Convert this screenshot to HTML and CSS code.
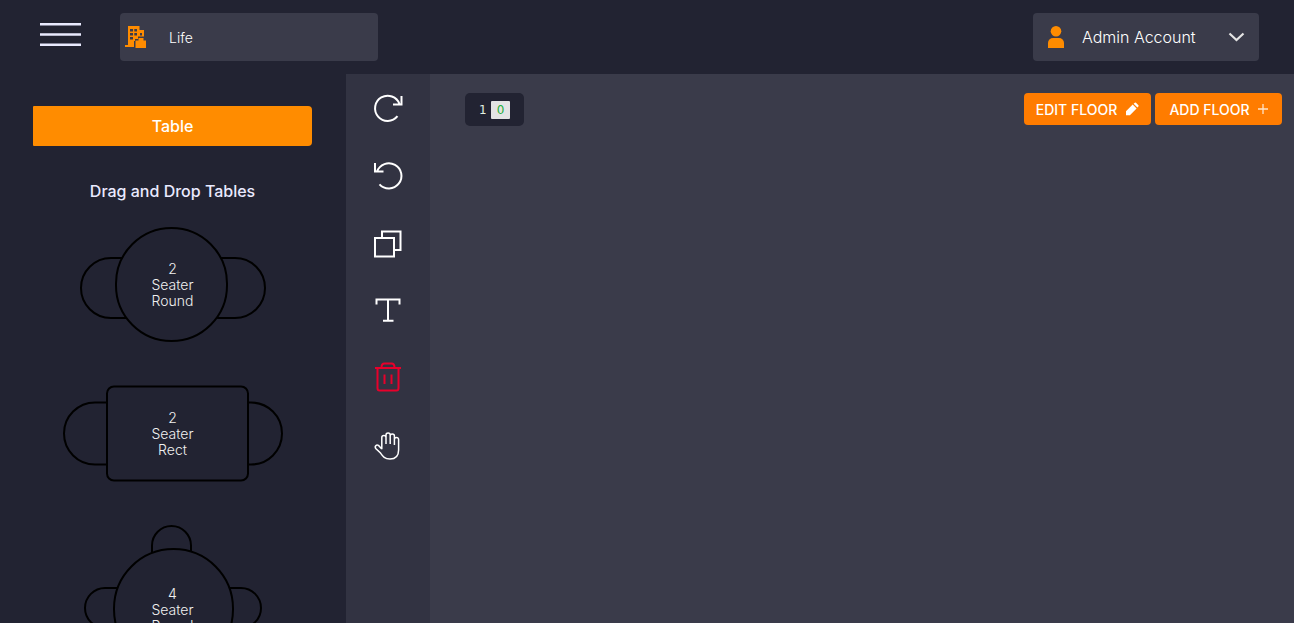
FILE: index.html
```html
<!DOCTYPE html>
<html lang="en">
<head>
<meta charset="utf-8">
<title>Floor editor</title>
<link rel="stylesheet" href="styles.css">
</head>
<body>
<header class="topbar">
  <button class="menu" aria-label="Menu"><svg width="42" height="26" viewBox="0 0 42 26"><path d="M0 2.2h41M0 12.5h41M0 22.8h41"/></svg></button>
  <label class="place">
    <svg width="22" height="22" viewBox="0 0 22 22" fill="#ff8c00" fill-rule="evenodd"><path d="M3 0h11.500v4H19v6.500h-6V13h-3v2H9v6H0v-2h3zM5 3v2.500h3V3zM9.300 3v2.500h2.700V3zM5 7v2.500h3V7zM9.300 7v2.500h2.700V7zM5 11v2.500h3V11zM15 7v2.500h2V7z"/><path d="M13.500 14.500V12h5v2.500H21V22H10.500v-7.500z"/></svg>
    <input class="place-name" type="text" value="Life" aria-label="Place">
  </label>
  <button class="account">
    <svg width="16" height="22" viewBox="0 0 16 22" fill="#ff8c00"><circle cx="8" cy="5.3" r="5.3"/><path d="M0 22v-5a5 5 0 0 1 5-5h6a5 5 0 0 1 5 5v5z"/></svg>
    <span class="account-name">Admin Account</span>
    <svg width="16" height="10" viewBox="0 0 16 10" fill="none" stroke="#e4e4e4" stroke-width="2.2"><path d="M1.5 1.500L8.500 8l7-6.500"/></svg>
  </button>
</header>
<main class="workspace">
  <aside class="sidebar">
    <button class="tab">Table</button>
    <h2 class="heading">Drag and Drop Tables</h2>
    <ul class="tables">
      <li class="table-item" draggable="true">
        <svg class="shape" width="188" height="116" viewBox="0 0 188 116"><rect x="2" y="31" width="76" height="60" rx="30"/><rect x="110" y="31" width="76" height="60" rx="30"/><rect class="top" x="37" y="1" width="111" height="113" rx="55.5"/></svg>
        <span class="label">2<br>Seater<br>Round</span>
      </li>
      <li class="table-item" draggable="true">
        <svg class="shape" width="220" height="98" viewBox="0 0 220 98"><rect x="1" y="17.500" width="80" height="62" rx="31"/><rect x="139" y="17.500" width="80" height="62" rx="31"/><rect class="top" x="44" y="1.500" width="141" height="94" rx="7"/></svg>
        <span class="label">2<br>Seater<br>Rect</span>
      </li>
      <li class="table-item" draggable="true">
        <svg class="shape" width="178" height="170" viewBox="0 0 178 170"><rect x="68" y="1" width="39" height="60" rx="19.5"/><rect x="68" y="107" width="39" height="60" rx="19.5"/><rect x="1" y="63" width="60" height="40" rx="20"/><rect x="117" y="63" width="60" height="40" rx="20"/><rect class="top" x="30" y="24" width="119" height="120" rx="59.5"/></svg>
        <span class="label">4<br>Seater<br>Round</span>
      </li>
    </ul>
  </aside>
  <nav class="tools" aria-label="Tools">
    <button class="tool" aria-label="Rotate right"><svg viewBox="0 0 32 32"><path d="M25.500 24.200A12.600 12.600 0 1 1 27.500 12M29.500 4v8.500H21"/></svg></button>
    <button class="tool" aria-label="Rotate left"><svg viewBox="0 0 32 32"><path d="M7.500 24.300A12.600 12.600 0 1 0 5 11.600M3 3v8.500h8.500"/></svg></button>
    <button class="tool" aria-label="Duplicate"><svg viewBox="0 0 32 32"><path d="M3 10h19v18.500H3zM10 10V3.500h18.500V22H22"/></svg></button>
    <button class="tool" aria-label="Text"><svg viewBox="0 0 32 32"><path d="M4.500 8.500V3.500h23v5M16 3.500v21M11 24.700h10.500"/></svg></button>
    <button class="tool delete" aria-label="Delete"><svg viewBox="0 0 32 32"><path d="M3 4h26M5.500 4v20q0 2.500 2 2.500h17q2 0 2-2.500V4M9.500 3.500q0-4 3-4h7q3 0 3 4M12.500 10.500V20M19.500 10.500V20"/></svg></button>
    <button class="tool" aria-label="Pan"><svg class="thin" viewBox="0 2 32 32"><path d="M9.800 19.300V7.500a2.100 2.100 0 0 1 4.200 0V14M14 14V5a2.100 2.100 0 0 1 4.200 0v9M18.200 14V6a2.100 2.100 0 0 1 4.200 0v9M22.400 14V9.500a2.100 2.100 0 0 1 4.200 0V20c0 6-3.500 9-8.600 9-5.500 0-7.200-2.700-9.500-6L4 18.800c-2-2.800.5-4.400 2.500-3.400L9.800 19"/></svg></button>
  </nav>
  <section class="floor">
    <button class="floor-tab">1 <span class="count">0</span></button>
    <div class="actions">
      <button class="action">EDIT FLOOR <svg width="14" height="14" viewBox="0 0 14 14" fill="#fff"><path d="M1 13.300V9.200L7.700 2.600l3.900 3.900-6.700 6.800zM8.600 1.700L9.800.7q.6-.5 1.200 0l2.400 2.500q.5.600 0 1.200l-1 1.100z"/></svg></button>
      <button class="action">ADD FLOOR <svg width="10" height="10" viewBox="0 0 10 10" stroke="#ffe3c8" stroke-width="1.300"><path d="M5 0v10M0 5h10"/></svg></button>
    </div>
  </section>
</main>
</body>
</html>
```
FILE: styles.css
```css
* { box-sizing: border-box; }

body {
  margin: 0;
  height: 100vh;
  display: flex;
  flex-direction: column;
  overflow: hidden;
  background: #222332;
  color: #fff;
  font-family: Inter, "Liberation Sans", sans-serif;
}

button, input {
  border: 0;
  padding: 0;
  background: none;
  color: inherit;
  font: inherit;
}

svg { display: block; flex: none; overflow: visible; }

.topbar {
  display: flex;
  align-items: center;
  padding: 13px 35px 13px 40px;
}

.menu {
  margin-right: 38px;
  padding-bottom: 4px;
}

.menu path { stroke: #eaeaff; stroke-width: 2.4; }

.place {
  display: flex;
  align-items: center;
  gap: 22px;
  width: 258px;
  height: 48px;
  padding: 0 5px;
  border-radius: 4px;
  background: #3a3b4a;
}

.place-name {
  flex: 1;
  min-width: 0;
  font-size: 14px;
  font-weight: 300;
}

.account {
  display: flex;
  align-items: center;
  width: 226px;
  height: 48px;
  margin-left: auto;
  padding: 0 15px;
  border-radius: 4px;
  background: #3a3b4a;
  font-size: 16px;
  font-weight: 300;
}

.account-name {
  flex: 1;
  padding-left: 18px;
  text-align: left;
}

.workspace {
  flex: 1;
  min-height: 0;
  display: flex;
}

.sidebar {
  width: 346px;
  padding: 32px 34px 0 33px;
  overflow: hidden;
}

.tab {
  display: block;
  width: 100%;
  height: 40px;
  border-radius: 1px 4px 4px 1px;
  background: #ff8c00;
  font-size: 16px;
  font-weight: 500;
}

.heading {
  margin: 35px 0 26px;
  font-size: 16px;
  line-height: 20px;
  font-weight: 500;
  text-align: center;
  color: #eaeaff;
}

.tables {
  display: flex;
  flex-direction: column;
  align-items: center;
  gap: 42px;
  margin: 0;
  padding: 0;
  list-style: none;
}

.table-item {
  display: grid;
  place-items: center;
}

.shape, .label { grid-area: 1 / 1; }

.shape { fill: #222332; stroke: #000; stroke-width: 2; }

.label {
  font-size: 14px;
  line-height: 16px;
  font-weight: 300;
  text-align: center;
  color: #f0f0f0;
}

.tools {
  display: flex;
  flex-direction: column;
  align-items: center;
  gap: 36px;
  width: 84px;
  padding-top: 18px;
  background: #323342;
}

.tool svg {
  width: 32px;
  height: 32px;
  fill: none;
  stroke: #fff;
  stroke-width: 2;
}

.delete svg { stroke: #e8002b; }

.tool .thin { stroke-width: 1.5; }

.floor {
  flex: 1;
  display: flex;
  justify-content: space-between;
  align-items: flex-start;
  padding: 19px 12px 0 35px;
  background: #3a3b4a;
}

.floor-tab {
  display: flex;
  align-items: center;
  gap: 4px;
  height: 33px;
  padding: 0 14px;
  border-radius: 5px;
  background: #222332;
  color: #e2f0e2;
  font-family: "DejaVu Sans", sans-serif;
  font-size: 12px;
}

.count {
  padding: 0 6px;
  line-height: 18px;
  border-radius: 1px;
  background: #e4e4e4;
  color: #1fae3c;
}

.actions { display: flex; gap: 4px; }

.action {
  display: flex;
  align-items: center;
  justify-content: center;
  gap: 8px;
  width: 127px;
  height: 32px;
  border-radius: 4px;
  background: #ff7c00;
  font-size: 14px;
  font-weight: 500;
}
```
